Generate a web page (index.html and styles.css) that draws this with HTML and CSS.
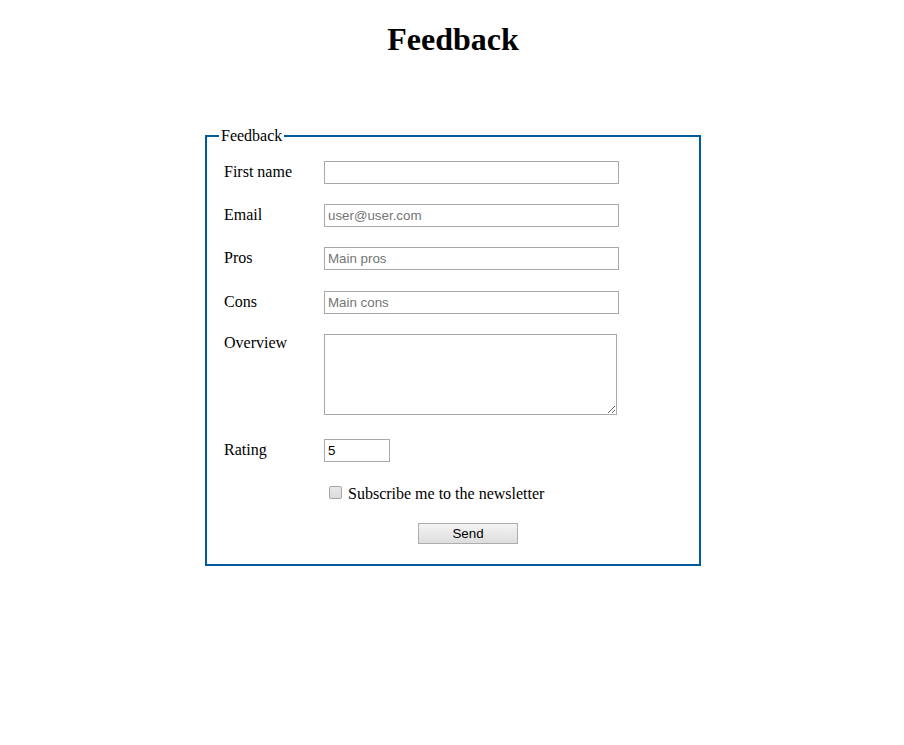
FILE: index.html
```html
<!DOCTYPE html>
<html>
<head>
<meta charset="utf-8">
<title>Feedback</title>
<link rel="stylesheet" href="styles.css">
</head>
<body>
<h1 class="title">Feedback</h1>
<form class="form">
  <fieldset class="box">
    <legend class="legend">Feedback</legend>
    <div class="row">
      <label class="label" for="fn">First name</label>
      <input class="field" id="fn" type="text">
    </div>
    <div class="row">
      <label class="label" for="em">Email</label>
      <input class="field" id="em" type="email" placeholder="user@user.com">
    </div>
    <div class="row">
      <label class="label" for="pr">Pros</label>
      <input class="field" id="pr" type="text" placeholder="Main pros">
    </div>
    <div class="row row-cons">
      <label class="label" for="co">Cons</label>
      <input class="field" id="co" type="text" placeholder="Main cons">
    </div>
    <div class="row">
      <label class="label" for="ov">Overview</label>
      <textarea class="area" id="ov"></textarea>
    </div>
    <div class="row row-rating">
      <label class="label" for="ra">Rating</label>
      <input class="num" id="ra" type="number" value="5">
    </div>
    <div class="row row-check">
      <span class="label"></span>
      <label class="check-label"><span class="check"></span>Subscribe me to the newsletter</label>
    </div>
    <div class="row row-send">
      <span class="label"></span>
      <button class="send" type="button">Send</button>
    </div>
  </fieldset>
</form>
</body>
</html>
```

FILE: styles.css
```css
body {
  margin: 0 7px 8px 9px;
  padding-top: 1px;
  font-family: "Liberation Serif", "Times New Roman", serif;
  font-size: 16px;
  color: #000;
  background: #fff;
}

.title {
  text-align: center;
  font-size: 32px;
  font-weight: bold;
  margin: 20px 0 21px;
}

.form {
  margin: 0;
  padding-top: 48px;
}

.box {
  width: 496px;
  box-sizing: border-box;
  margin: 0 auto;
  border: 2px solid #005a9e;
  padding: 7px 12px 20px 17px;
}

.legend {
  padding: 0 2px;
  margin-left: -5px;
}

.row {
  display: flex;
  align-items: baseline;
  margin-top: 9px;
}

.row + .row {
  margin-top: 20px;
}

.row.row-cons {
  margin-top: 21px;
}

.label {
  width: 100px;
  flex: none;
}

.field {
  width: 295px;
  height: 23px;
  box-sizing: border-box;
  border: 1px solid #a9a9a9;
  padding: 0 3px;
  margin: 0;
  font-family: "Liberation Sans", Arial, sans-serif;
  font-size: 13.33px;
  color: #000;
}

.field::placeholder {
  color: #757575;
}

.area {
  width: 293px;
  height: 81px;
  box-sizing: border-box;
  border: 1px solid #a9a9a9;
  padding: 2px;
  margin: 0;
  font-family: "Liberation Mono", monospace;
  font-size: 13.33px;
  resize: both;
}

.row.row-rating {
  margin-top: 24px;
}

.num {
  width: 66px;
  height: 23px;
  box-sizing: border-box;
  border: 1px solid #a9a9a9;
  padding: 0 3px;
  margin: 0;
  font-family: "Liberation Sans", Arial, sans-serif;
  font-size: 13.33px;
}

.num::-webkit-inner-spin-button,
.num::-webkit-outer-spin-button {
  -webkit-appearance: none;
  margin: 0;
}

.row.row-check {
  margin-top: 23px;
}

.check-label {
  display: flex;
  align-items: baseline;
}

.check {
  display: inline-block;
  width: 11px;
  height: 11px;
  border: 1px solid #a6a6a6;
  border-radius: 2px;
  background: linear-gradient(#e9e9e9, #dcdcdc);
  margin: 0 6px 0 5px;
}

.row.row-send {
  margin-top: 20px;
}

.send {
  margin: 0 0 0 94px;
  width: 100px;
  height: 21px;
  box-sizing: border-box;
  border: 1px solid #adadad;
  background: linear-gradient(#f4f4f4, #dddddd);
  font-family: "Liberation Sans", Arial, sans-serif;
  font-size: 13.33px;
  color: #000;
  padding: 0;
}
```
